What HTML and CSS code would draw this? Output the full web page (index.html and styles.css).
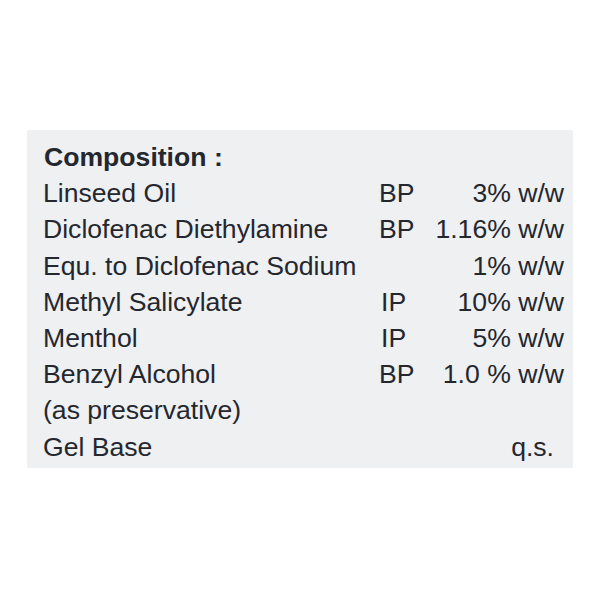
FILE: index.html
```html
<!DOCTYPE html>
<html>
<head>
<meta charset="utf-8">
<link rel="stylesheet" href="styles.css">
</head>
<body>
<div class="panel">
  <div class="title">Composition :</div>
  <div class="row"><span class="name">Linseed Oil</span><span class="std">BP</span><span class="val">3% w/w</span></div>
  <div class="row"><span class="name">Diclofenac Diethylamine</span><span class="std">BP</span><span class="val">1.16% w/w</span></div>
  <div class="row"><span class="name">Equ. to Diclofenac Sodium</span><span class="std"></span><span class="val">1% w/w</span></div>
  <div class="row"><span class="name">Methyl Salicylate</span><span class="std ip">IP</span><span class="val">10% w/w</span></div>
  <div class="row"><span class="name">Menthol</span><span class="std ip">IP</span><span class="val">5% w/w</span></div>
  <div class="row"><span class="name">Benzyl Alcohol</span><span class="std">BP</span><span class="val">1.0 % w/w</span></div>
  <div class="row"><span class="name">(as preservative)</span></div>
  <div class="row"><span class="name">Gel Base</span><span class="std"></span><span class="val qs">q.s.</span></div>
</div>
</body>
</html>
```
FILE: styles.css
```css
html, body {
  margin: 0;
  padding: 0;
  background: #ffffff;
}
body {
  width: 600px;
  height: 600px;
  overflow: hidden;
  font-family: "Liberation Sans", Arial, sans-serif;
  color: #25272e;
}
.panel {
  margin: 130px 0 0 27px;
  width: 546px;
  height: 338px;
  box-sizing: border-box;
  padding: 9px 9px 0 16px;
  background: #eef0f2;
  font-size: 26.6px;
  line-height: 36.2px;
}
.title {
  font-weight: bold;
  padding-left: 1px;
}
.row {
  display: grid;
  grid-template-columns: 336px 44px 1fr;
  white-space: nowrap;
}
.ip {
  padding-left: 2px;
}
.val {
  text-align: right;
}
.qs {
  padding-right: 10px;
}
```
